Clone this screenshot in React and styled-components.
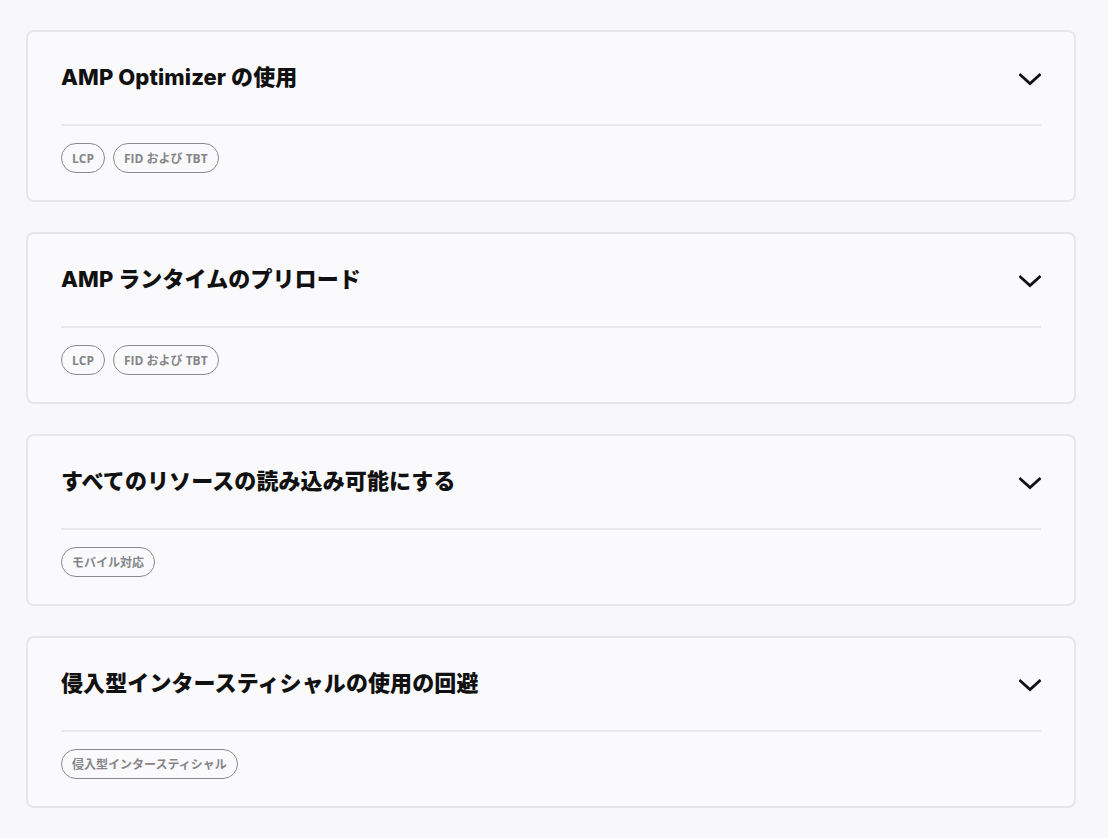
import React from "react";
import styled, { createGlobalStyle } from "styled-components";

const GlobalStyle = createGlobalStyle`
  html, body {
    margin: 0;
    padding: 0;
    background: #f8f8fa;
  }
  body {
    font-family: "Inter", "Noto Sans CJK JP", sans-serif;
  }
`;

const items = [
  { title: "AMP Optimizer の使用", tags: ["LCP", "FID および TBT"] },
  { title: "AMP ランタイムのプリロード", tags: ["LCP", "FID および TBT"] },
  { title: "すべてのリソースの読み込み可能にする", tags: ["モバイル対応"] },
  { title: "侵入型インタースティシャルの使用の回避", tags: ["侵入型インタースティシャル"] },
];

function Chevron() {
  return (
    <svg width="22" height="13" viewBox="0 0 22 13" fill="none">
      <path
        d="M1.5 2 L11 10.5 L20.5 2"
        stroke="#111"
        strokeWidth="2.8"
        strokeLinecap="square"
      />
    </svg>
  );
}

export default function App() {
  return (
    <>
      <GlobalStyle />
      <List>
        {items.map((item, index) => (
          <Card key={index}>
            <Header>
              <Title>{item.title}</Title>
              <Toggle aria-label="展開">
                <Chevron />
              </Toggle>
            </Header>
            <Divider />
            <Tags>
              {item.tags.map((tag) => (
                <Tag key={tag}>{tag}</Tag>
              ))}
            </Tags>
          </Card>
        ))}
      </List>
    </>
  );
}

const List = styled.div`
  width: 1050px;
  margin-left: 26px;
  padding: 30px 0 30px 0;
  display: flex;
  flex-direction: column;
  gap: 30px;
`;

const Card = styled.div`
  background: #fafafc;
  border: 2px solid #e7e7ea;
  border-radius: 8px;
  padding: 27px 33px 27px 33px;
`;

const Header = styled.div`
  display: flex;
  align-items: center;
  justify-content: space-between;
  height: 32px;
  margin-bottom: 33px;
`;

const Title = styled.h2`
  margin: 0;
  font-family: "Inter", "Noto Sans CJK JP", sans-serif;
  font-size: 22px;
  font-weight: 800;
  color: #111;
  letter-spacing: 0.1px;
`;

const Toggle = styled.button`
  background: none;
  border: none;
  padding: 0;
  display: flex;
  align-items: center;
  margin-top: 9px;
`;

const Divider = styled.div`
  height: 2px;
  background: #e9e9ec;
  margin-bottom: 17px;
`;

const Tags = styled.div`
  display: flex;
  gap: 8px;
`;

const Tag = styled.span`
  box-sizing: border-box;
  height: 30px;
  display: inline-flex;
  align-items: center;
  padding: 0 10px;
  border: 1px solid #8a8a8e;
  border-radius: 15px;
  font-family: "Open Sans", "Noto Sans CJK JP", sans-serif;
  font-size: 12px;
  font-weight: 700;
  color: #858589;
`;
